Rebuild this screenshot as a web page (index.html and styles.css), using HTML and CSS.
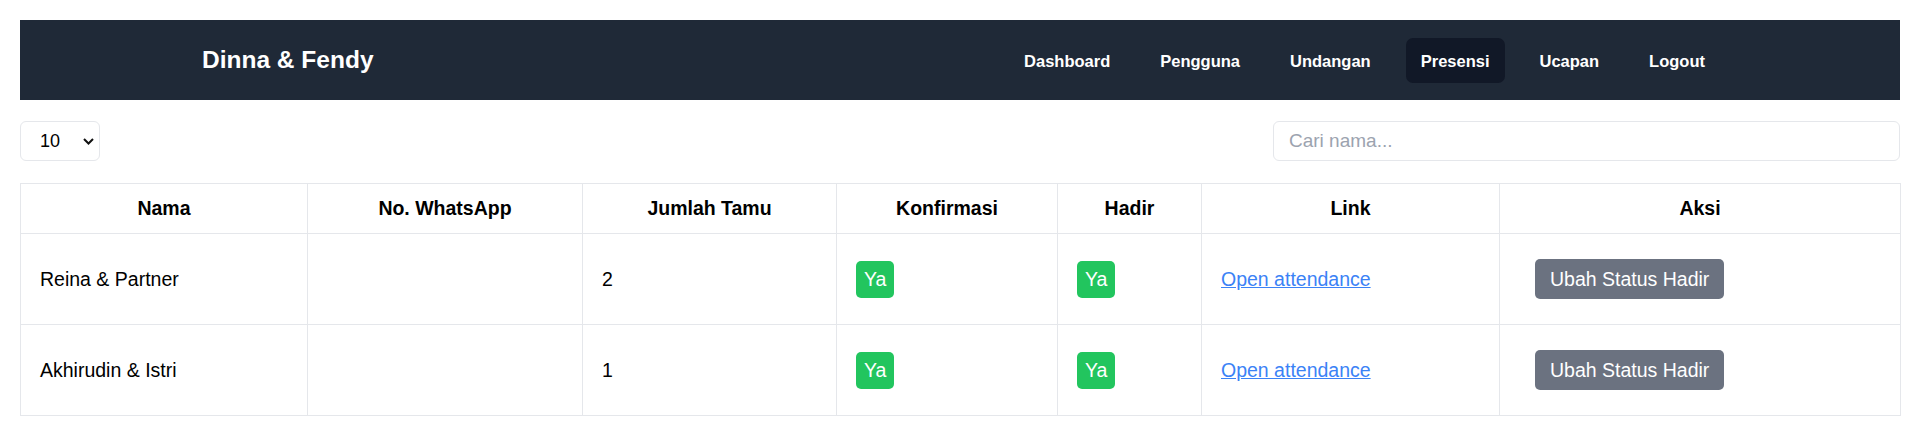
FILE: index.html
```html
<!DOCTYPE html>
<html lang="id">
<head>
<meta charset="utf-8">
<title>Presensi - Dinna &amp; Fendy</title>
<link rel="stylesheet" href="styles.css">
</head>
<body>
<div class="page">
  <nav class="navbar">
    <div class="nav-inner">
      <a class="brand" href="#">Dinna &amp; Fendy</a>
      <ul class="nav-links">
        <li><a href="#">Dashboard</a></li>
        <li><a href="#">Pengguna</a></li>
        <li><a href="#">Undangan</a></li>
        <li><a class="active" href="#">Presensi</a></li>
        <li><a href="#">Ucapan</a></li>
        <li><a href="#">Logout</a></li>
      </ul>
    </div>
  </nav>

  <div class="toolbar">
    <div class="select-wrap">
      <select class="per-page">
        <option>10</option>
        <option>25</option>
        <option>50</option>
      </select>
      <svg class="chevron" width="11" height="7" viewBox="0 0 11 7" aria-hidden="true"><path d="M1 1l4.5 4.5L10 1" fill="none" stroke="#111" stroke-width="2"/></svg>
    </div>
    <input class="search" type="text" placeholder="Cari nama...">
  </div>

  <table class="data-table">
    <colgroup>
      <col class="c-nama">
      <col class="c-wa">
      <col class="c-jumlah">
      <col class="c-konf">
      <col class="c-hadir">
      <col class="c-link">
      <col class="c-aksi">
    </colgroup>
    <thead>
      <tr>
        <th>Nama</th>
        <th>No. WhatsApp</th>
        <th>Jumlah Tamu</th>
        <th>Konfirmasi</th>
        <th>Hadir</th>
        <th>Link</th>
        <th>Aksi</th>
      </tr>
    </thead>
    <tbody>
      <tr>
        <td>Reina &amp; Partner</td>
        <td></td>
        <td>2</td>
        <td><span class="badge">Ya</span></td>
        <td><span class="badge">Ya</span></td>
        <td><a class="link" href="#">Open attendance</a></td>
        <td class="action"><button class="btn" type="button">Ubah Status Hadir</button></td>
      </tr>
      <tr>
        <td>Akhirudin &amp; Istri</td>
        <td></td>
        <td>1</td>
        <td><span class="badge">Ya</span></td>
        <td><span class="badge">Ya</span></td>
        <td><a class="link" href="#">Open attendance</a></td>
        <td class="action"><button class="btn" type="button">Ubah Status Hadir</button></td>
      </tr>
    </tbody>
  </table>
</div>
</body>
</html>
```

FILE: styles.css
```css
* { box-sizing: border-box; }

body {
  margin: 0;
  font-family: "Liberation Sans", Arial, sans-serif;
  color: #000;
  background: #fff;
}

.page {
  padding: 20px 14px 0 20px;
}

/* Navbar */
.navbar {
  background: #1f2937;
  height: 80px;
}

.nav-inner {
  height: 100%;
  display: flex;
  align-items: center;
  justify-content: space-between;
  padding: 0 180px 0 182px;
}

.brand {
  color: #fff;
  font-weight: 700;
  font-size: 24.5px;
  text-decoration: none;
}

.nav-links {
  list-style: none;
  margin: 0;
  padding: 0;
  display: flex;
  gap: 20px;
}

.nav-links a {
  display: block;
  color: #fff;
  font-weight: 700;
  font-size: 16.5px;
  padding: 1px 15px 0;
  height: 45px;
  line-height: 44px;
  border-radius: 7px;
  text-decoration: none;
}

.nav-links a.active {
  background: #111827;
}

/* Toolbar */
.toolbar {
  display: flex;
  justify-content: space-between;
  align-items: center;
  margin: 21px 0 22px;
}

.select-wrap {
  position: relative;
  width: 80px;
  height: 40px;
}

.per-page {
  width: 80px;
  height: 40px;
  border: 1px solid #e5e7eb;
  border-radius: 6px;
  padding: 0 0 0 19px;
  font-family: "Liberation Sans", Arial, sans-serif;
  font-size: 18px;
  color: #000;
  background: #fff;
  appearance: none;
  -webkit-appearance: none;
  outline: none;
}

.chevron {
  position: absolute;
  right: 6px;
  top: 17px;
  pointer-events: none;
}

.search {
  width: 627px;
  height: 40px;
  border: 1px solid #e5e7eb;
  border-radius: 6px;
  padding: 0 15px;
  font-family: "Liberation Sans", Arial, sans-serif;
  font-size: 19px;
  color: #000;
  outline: none;
}

.search::placeholder {
  color: #9ca3af;
}

/* Table */
.data-table {
  width: 100%;
  border-collapse: collapse;
  table-layout: fixed;
  border: 1px solid #e5e7eb;
}

.c-nama { width: 287px; }
.c-wa { width: 275px; }
.c-jumlah { width: 254px; }
.c-konf { width: 221px; }
.c-hadir { width: 144px; }
.c-link { width: 298px; }
.c-aksi { width: 401px; }

.data-table th,
.data-table td {
  border: 1px solid #e5e7eb;
}

.data-table th {
  padding: 12px 19px;
  line-height: 25px;
  font-size: 19.5px;
  font-weight: 700;
  text-align: center;
}

.data-table td {
  padding: 25px 19px;
  line-height: 22px;
  font-size: 19.5px;
  text-align: left;
  vertical-align: middle;
}

.data-table td.action {
  padding-left: 35px;
}

.badge {
  display: inline-block;
  background: #22c55e;
  color: #fff;
  height: 37px;
  line-height: 37px;
  padding: 0 8px;
  border-radius: 5px;
  font-size: 19.5px;
  vertical-align: middle;
}

.link {
  color: #3b82f6;
  text-decoration: underline;
}

.btn {
  display: inline-block;
  height: 40px;
  padding: 0 15px;
  border: 0;
  border-radius: 5px;
  background: #6b7280;
  color: #fff;
  font-family: "Liberation Sans", Arial, sans-serif;
  font-size: 19.5px;
  vertical-align: middle;
  cursor: pointer;
}
```
